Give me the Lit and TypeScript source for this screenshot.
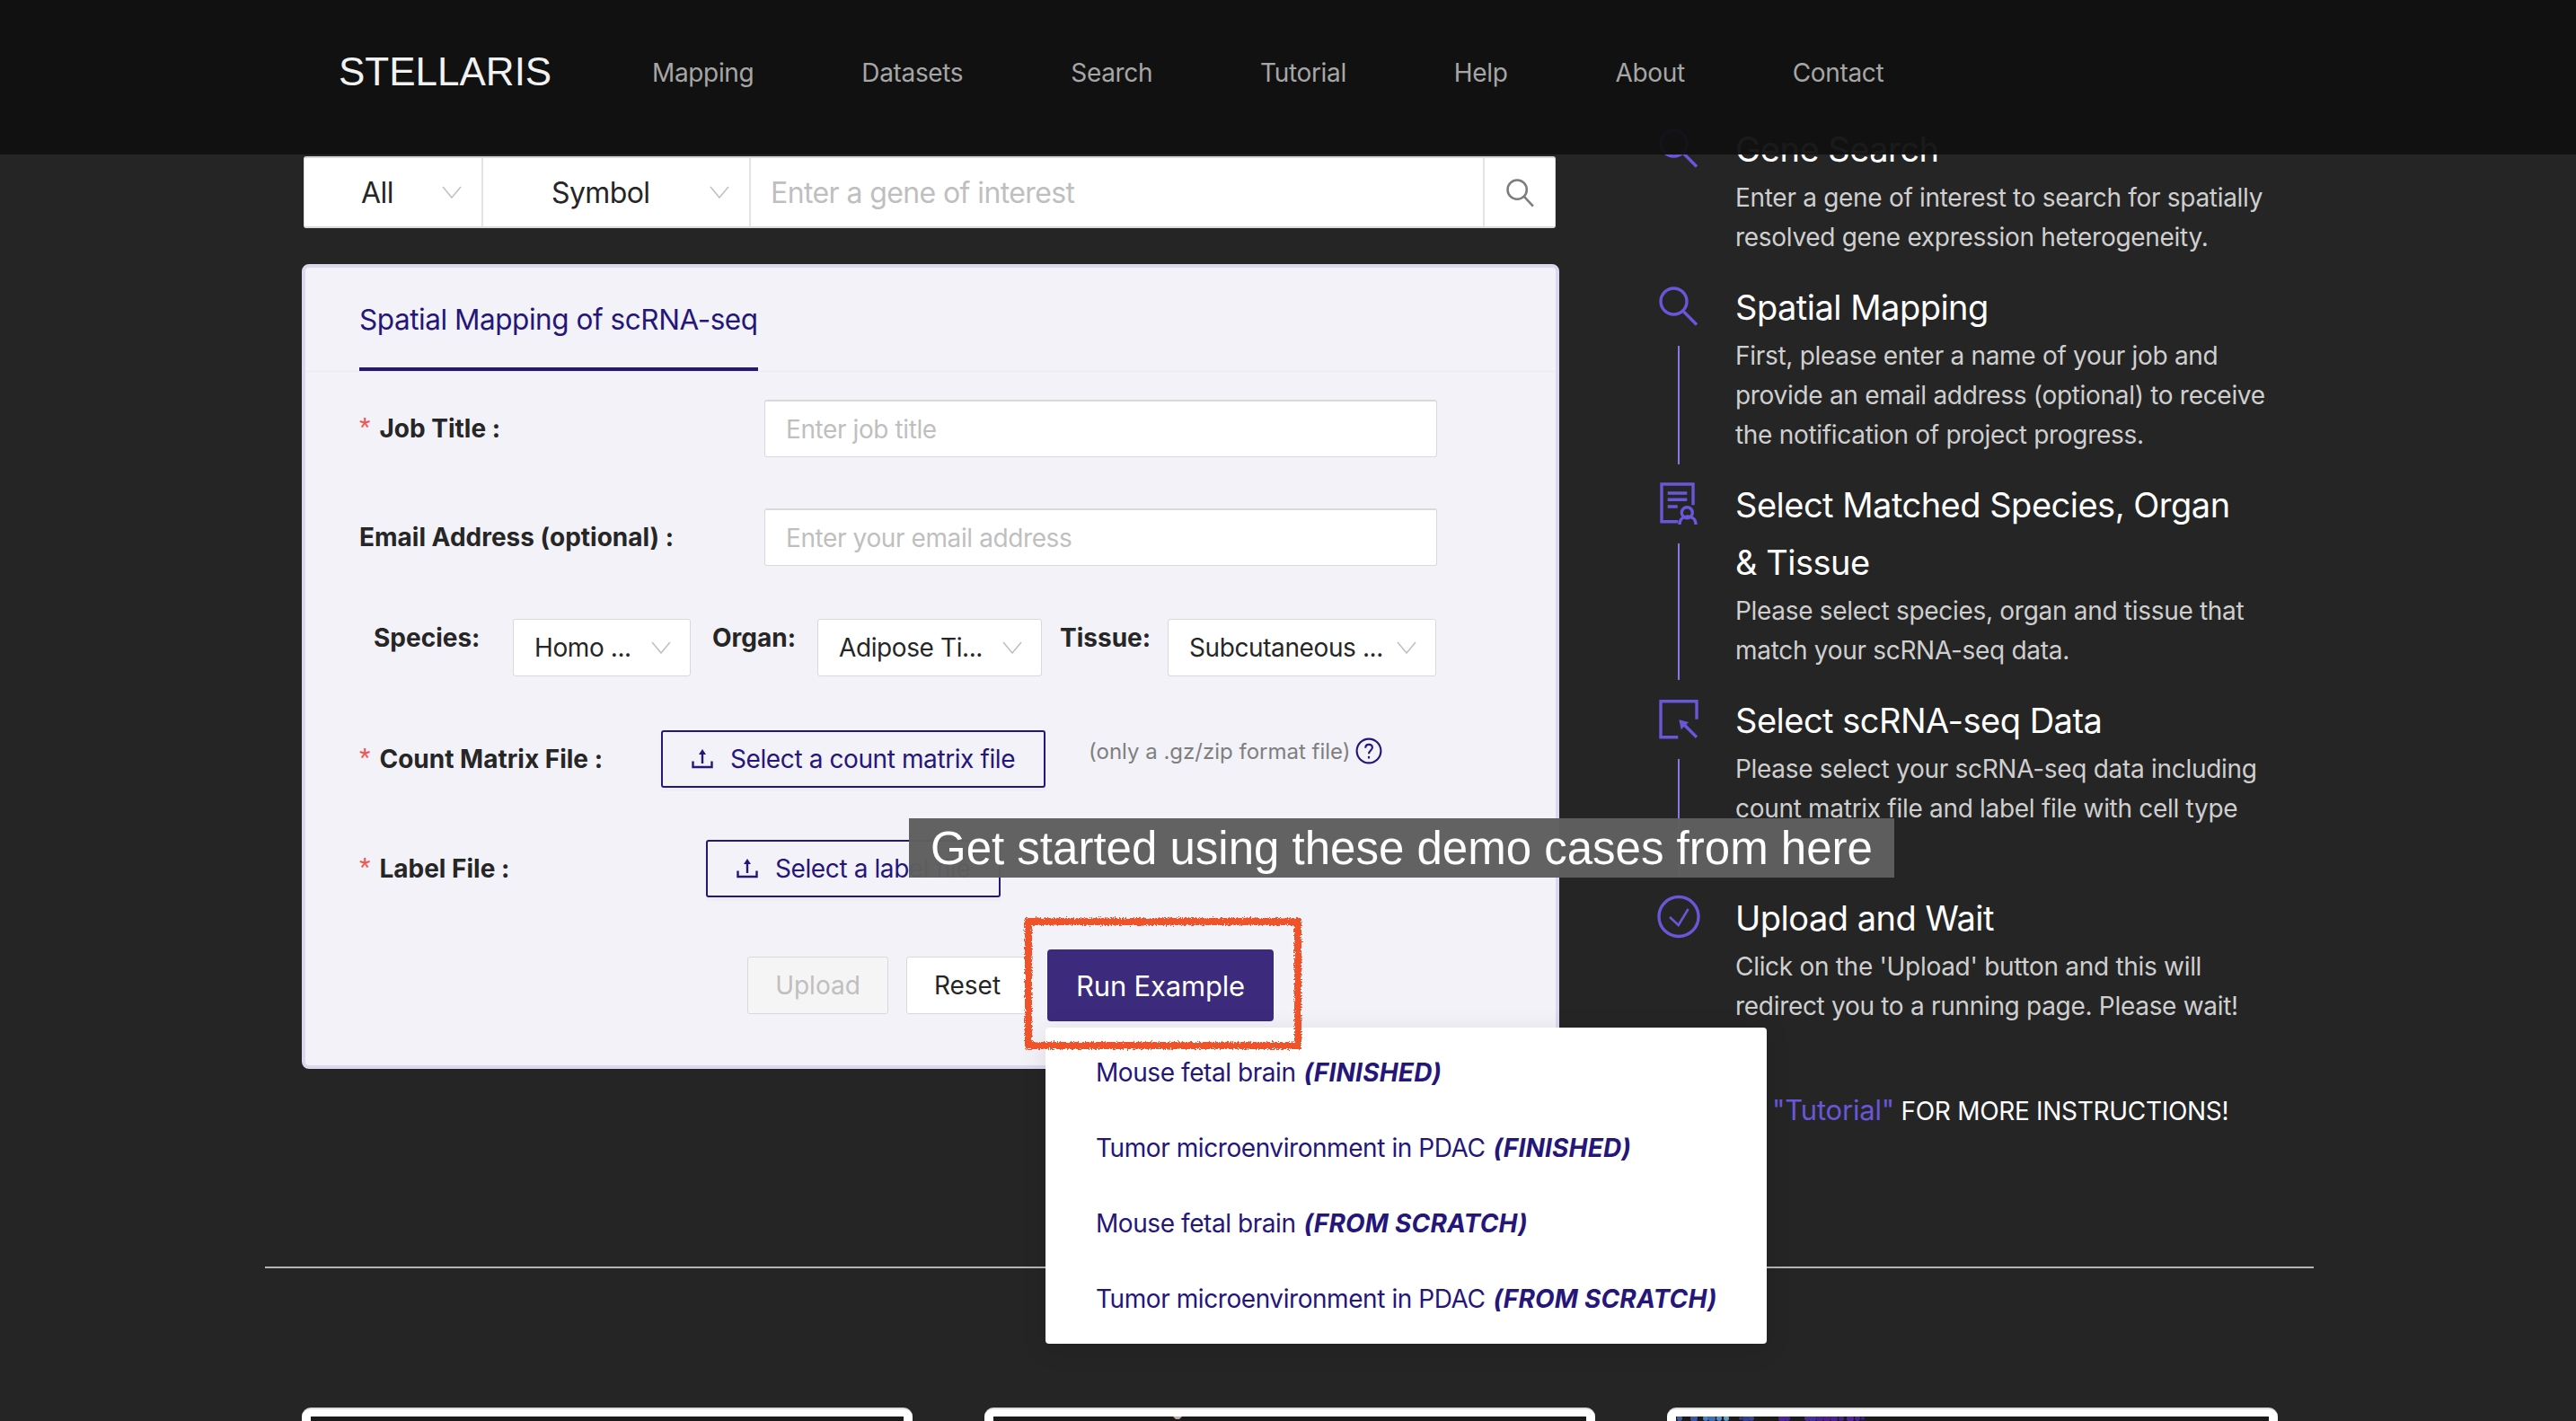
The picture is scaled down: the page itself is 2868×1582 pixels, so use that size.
import { LitElement, html, css, svg } from 'lit';
import { customElement } from 'lit/decorators.js';

const chevron = html`<svg class="chev" viewBox="0 0 22 14"><path d="M1 1 11 13 21 1" fill="none" stroke="currentColor" stroke-width="1.5"/></svg>`;

const upload = html`<svg class="up" viewBox="0 0 24 24" fill="none" stroke="currentColor" stroke-width="2.4"><path d="M1.5 14.5v6.5h21v-6.5M12 6v11"/><path d="M12 1 16 7H8Z" fill="currentColor" stroke="none"/></svg>`;

// drawn on a 48 box, traced from the reference icons
const stepIcons = {
    search: svg`<circle cx="18.5" cy="19.5" r="14.5"/><path d="M29.6 31 44 45.5"/>`,
    doc: svg`<path d="M23.3 44.7H5V3h35v23.3"/><path d="M11.7 13h21.6M11.7 20.3h21.6M11.7 28h11"/><circle cx="33.3" cy="34.7" r="6"/><path d="M25 48c0-6 4-9 9-9s9 3 9 9"/>`,
    select: svg`<path d="M23.3 44.7H4V4.7h40v20"/><path d="M44 44.7 28.3 29"/><path d="M24.3 25.3 35 28 26.7 36.3Z" fill="#6857d8" stroke="none"/>`,
    check: svg`<circle cx="24" cy="24.5" r="22"/><path d="M14 25 23.7 34 34.6 16" stroke-width="2.6"/>`,
};

const steps = [
    { icon: 'search', title: ['Gene Search'], lines: ['Enter a gene of interest to search for spatially', 'resolved gene expression heterogeneity.'], rail: false, extra: 0 },
    { icon: 'search', title: ['Spatial Mapping'], lines: ['First, please enter a name of your job and', 'provide an email address (optional) to receive', 'the notification of project progress.'], rail: true, extra: 0 },
    { icon: 'doc', title: ['Select Matched Species, Organ', '& Tissue'], lines: ['Please select species, organ and tissue that', 'match your scRNA-seq data.'], rail: true, extra: 0 },
    // a third line of this step is covered by the callout in the reference
    { icon: 'select', title: ['Select scRNA-seq Data'], lines: ['Please select your scRNA-seq data including', 'count matrix file and label file with cell type'], rail: true, extra: 44 },
    { icon: 'check', title: ['Upload and Wait'], lines: ["Click on the 'Upload' button and this will", 'redirect you to a running page. Please wait!'], rail: false, extra: 0 },
];

const examples = [
    ['Mouse fetal brain', '(FINISHED)'],
    ['Tumor microenvironment in PDAC', '(FINISHED)'],
    ['Mouse fetal brain', '(FROM SCRATCH)'],
    ['Tumor microenvironment in PDAC', '(FROM SCRATCH)'],
];

// top edge of the third gallery picture: x, radius, colour
const dots: [number, number, string][] = [
    [4, 3, '#3d5aa8'], [20, 4, '#3b55a6'], [33, 3, '#4a7fc0'], [40, 4, '#3c6cb4'], [48, 3, '#4f8fc8'],
    [56, 3, '#5aa0cc'], [72, 2, '#2c3f7c'], [78, 4, '#2f3f8c'], [84, 3, '#35458f'],
    [118, 4, '#4a2398'], [124, 3, '#4a2398'], [146, 3, '#4b2c9c'], [152, 4, '#3f2fa0'], [160, 4, '#4b1f90'],
    [168, 4, '#4d1d8c'], [176, 4, '#4b1f90'], [184, 3, '#43208a'], [194, 4, '#4f2399'], [202, 3, '#4a2096'], [208, 2, '#3d1f88'],
];

@customElement('app-root')
export class AppRoot extends LitElement {
    static styles = css`
    :host {
      display: block;
      position: relative;
      height: 1582px;
      overflow: hidden;
      background: #252525;
      font-family: Inter, 'Liberation Sans', sans-serif;
    }

    /* top bar sits over the scrolled page */
    .topbar {
      position: absolute;
      inset: 0 0 auto 0;
      z-index: 5;
      height: 172px;
      background: rgba(17, 17, 17, 0.96);
      display: flex;
      align-items: center;
      padding: 0 0 12px 377px;
      box-sizing: border-box;
    }
    .logo {
      font-family: 'Liberation Sans', Arial, sans-serif;
      font-size: 44px;
      color: #f2f2f2;
      width: 349px;
    }
    .nav { display: flex; gap: 120px; font-size: 28px; letter-spacing: -0.35px; color: #a6a6a6; padding-top: 2px; }

    .page {
      display: grid;
      grid-template-columns: 1400px 660px;
      column-gap: 109px;
      padding: 132px 0 0 336px;
      height: 1278px;
      box-sizing: border-box;
    }
    .left { padding-top: 42px; }

    .searchbar {
      display: flex;
      width: 1394px;
      height: 80px;
      margin-left: 2px;
      background: #fff;
      border: 1px solid #d9d9d9;
      border-width: 2px 1px;
      box-sizing: border-box;
      border-radius: 3px;
      font-size: 32px;
      letter-spacing: -0.6px;
      color: #262626;
    }
    .seg {
      display: flex;
      align-items: center;
      border-right: 2px solid #e4e4e4;
      box-sizing: border-box;
      position: relative;
    }
    .seg.all { width: 199px; padding-left: 63px; }
    .seg.sym { width: 298px; padding-left: 76px; }
    .seg .chev { position: absolute; right: 22px; top: 31px; color: #bfbfbf; }
    .chev { width: 22px; height: 14px; flex: none; }
    .searchbar .ph { flex: 1; padding-left: 22px; color: #bfbfbf; display: flex; align-items: center; }
    .searchbtn { width: 78px; border-left: 2px solid #e4e4e4; display: flex; align-items: center; justify-content: center; color: #7d7d7d; }
    .searchbtn svg { width: 34px; height: 34px; }

    .card {
      margin-top: 40px;
      height: 896px;
      box-sizing: border-box;
      background: #f2f2f8;
      border: 4px solid #dcd8f0;
      border-radius: 8px;
      padding: 0;
    }
    .tabs {
      height: 115px;
      border-bottom: 1px solid #ebebf0;
      padding-left: 60px;
    }
    .tab {
      display: inline-block;
      height: 115px;
      box-sizing: border-box;
      border-bottom: 4px solid #25167a;
      padding-top: 38px;
      font-size: 31.5px;
      letter-spacing: -0.45px;
      color: #25167a;
      line-height: 40px;
    }

    .row {
      display: flex;
      align-items: center;
      margin-left: 60px;
      font-size: 28px;
      color: #262626;
    }
    .lab { font-weight: 700; white-space: nowrap; line-height: 40px; }
    .star {
      color: #f5504e;
      font-weight: 400;
      font-size: 32px;
      line-height: 1;
      margin-right: 10px;
      font-family: 'Liberation Sans', sans-serif;
    }
    .input {
      height: 64px;
      background: #fff;
      border: 1px solid #d9d9d9;
      border-top-width: 2px;
      box-sizing: border-box;
      border-radius: 3px;
      display: flex;
      align-items: center;
      padding-left: 23px;
      color: #bfbfbf;
      width: 749px;
      letter-spacing: -0.4px;
    }
    .r-job { margin-top: 31px; }
    .r-job .lab { width: 451px; }
    .r-mail { margin-top: 57px; }
    .r-mail .lab { width: 451px; }

    .r-species { margin-top: 59px; }
    .r-species .lab { align-self: flex-start; margin-top: 1px; }
    .pick {
      height: 64px;
      background: #fff;
      border: 1px solid #d9d9d9;
      box-sizing: border-box;
      border-radius: 3px;
      display: flex;
      align-items: center;
      justify-content: space-between;
      padding: 0 21px 0 23px;
      white-space: nowrap;
      letter-spacing: -0.4px;
    }
    .pick .chev { color: #bfbfbf; }

    .filebtn {
      display: flex;
      align-items: center;
      gap: 19px;
      height: 64px;
      box-sizing: border-box;
      border: 2px solid #25167a;
      border-radius: 3px;
      color: #25167a;
      padding-left: 32px;
      letter-spacing: -0.4px;
      box-shadow: 0 4px 0 rgba(0, 0, 0, 0.02);
    }
    .up { width: 24px; height: 24px; flex: none; }
    .r-count { margin-top: 60px; position: relative; }
    .r-count .lab { width: 336px; }
    .r-count .filebtn { width: 428px; }
    .hint { margin-left: 48px; color: #7f7f7f; font-size: 24px; margin-top: -18px; display: flex; align-items: center; gap: 5px; }
    .hint svg { width: 30px; height: 30px; color: #25167a; }
    .r-label { margin-top: 58px; }
    .r-label .lab { width: 386px; }
    .r-label .filebtn { width: 328px; white-space: nowrap; overflow: hidden; }

    .actions { display: flex; align-items: center; margin: 58px 0 0 492px; font-size: 28px; }
    .btn {
      height: 64px;
      box-sizing: border-box;
      background: #fff;
      border: 1px solid #d9d9d9;
      border-radius: 3px;
      display: flex;
      align-items: center;
      justify-content: center;
      color: #262626;
    }
    .btn.off { width: 157px; background: #f5f5f5; color: #bfbfbf; }
    .btn.reset { width: 136px; margin-left: 20px; }
    .btn.run {
      width: 252px;
      height: 80px;
      margin-left: 21px;
      border: none;
      background: #3c2a7c;
      color: #fff;
      font-size: 31px;
      letter-spacing: -0.2px;
      border-radius: 4px;
    }

    .guide { margin-top: 2px; }
    .step { display: grid; grid-template-columns: 48px 1fr; column-gap: 39px; }
    .rail { display: flex; flex-direction: column; align-items: center; }
    .rail svg {
      width: 48px;
      height: 48px;
      margin-top: 6px;
      overflow: visible;
      fill: none;
      stroke: #6857d8;
      stroke-width: 3.4;
      flex: none;
    }
    .line { width: 2px; background: #8a78e0; flex: 1; margin: 21px 0 13px; }
    .title { font-size: 38px; letter-spacing: -0.5px; line-height: 64px; color: #fff; }
    .desc { font-size: 28px; letter-spacing: -0.3px; line-height: 44px; color: #cfcfcf; margin-bottom: 24px; }
    .desc div, .title div { white-space: nowrap; }
    .more { margin: 51px 0 0 128px; font-size: 28px; letter-spacing: -0.3px; color: #fff; white-space: nowrap; }
    .more em { font-style: normal; font-size: 31px; letter-spacing: -0.2px; color: #6857d8; }

    .rule { position: absolute; left: 295px; width: 2281px; top: 1410px; height: 2px; background: #b5b5b5; }

    .gallery {
      position: absolute;
      top: 1567px;
      left: 336px;
      display: grid;
      grid-template-columns: repeat(3, 680px);
      column-gap: 80px;
    }
    .shot {
      height: 60px;
      box-sizing: border-box;
      background: #fff;
      border-top: 2px solid #dedede;
      border-radius: 10px 10px 0 0;
      padding: 8px 10px 0;
    }
    .shot svg { display: block; width: 660px; height: 50px; background: #1a1a1a; }

    /* things on top of the page: example menu and the tutorial annotations */
    .menu {
      position: absolute;
      z-index: 3;
      left: 1164px;
      top: 1144px;
      width: 803px;
      height: 352px;
      background: #fff;
      border-radius: 4px;
      box-shadow: 0 6px 30px rgba(0, 0, 0, 0.1);
      padding: 8px 0 0 56px;
      box-sizing: border-box;
      color: #25167a;
      font-size: 28px;
    }
    .menu div { height: 84px; display: flex; align-items: center; gap: 9px; white-space: nowrap; }
    .menu span { letter-spacing: -0.43px; }
    .menu b { font-style: italic; font-weight: 700; letter-spacing: 0.2px; }

    .callout {
      position: absolute;
      z-index: 4;
      left: 1012px;
      top: 911px;
      width: 1097px;
      height: 66px;
      box-sizing: border-box;
      padding-left: 24px;
      background: rgba(95, 95, 95, 0.98);
      color: #fff;
      font-family: 'Liberation Sans', Arial, sans-serif;
      font-size: 51px;
      line-height: 68px;
      white-space: nowrap;
    }
    .scribble { position: absolute; z-index: 4; left: 1130px; top: 1010px; width: 330px; height: 170px; }
    `;

    render() {
        return html`
      <div class="page">
        <div class="left">
          <div class="searchbar">
            <div class="seg all">All ${chevron}</div>
            <div class="seg sym">Symbol ${chevron}</div>
            <div class="ph">Enter a gene of interest</div>
            <div class="searchbtn">
              <svg viewBox="0 0 24 24" fill="none" stroke="currentColor" stroke-width="1.8"><circle cx="10" cy="10" r="7.5"/><path d="M15.5 15.5 22.5 23"/></svg>
            </div>
          </div>
          <div class="card">
            <div class="tabs"><span class="tab">Spatial Mapping of scRNA-seq</span></div>
            <div class="row r-job">
              <span class="lab"><span class="star">*</span>Job Title :</span>
              <div class="input">Enter job title</div>
            </div>
            <div class="row r-mail">
              <span class="lab">Email Address (optional) :</span>
              <div class="input">Enter your email address</div>
            </div>
            <div class="row r-species">
              <span class="lab" style="margin-left:16px;width:155px">Species:</span>
              <div class="pick" style="width:198px">Homo ... ${chevron}</div>
              <span class="lab" style="margin-left:24px;width:117px">Organ:</span>
              <div class="pick" style="width:250px">Adipose Ti... ${chevron}</div>
              <span class="lab" style="margin-left:20px;width:120px">Tissue:</span>
              <div class="pick" style="width:299px">Subcutaneous ... ${chevron}</div>
            </div>
            <div class="row r-count">
              <span class="lab"><span class="star">*</span>Count Matrix File :</span>
              <div class="filebtn">${upload}Select a count matrix file</div>
              <div class="hint">(only a .gz/zip format file)
                <svg viewBox="0 0 28 28" fill="none" stroke="currentColor" stroke-width="2"><circle cx="14" cy="14" r="12.5"/><path d="M10.5 11c0-2.2 1.6-3.6 3.6-3.6s3.5 1.3 3.5 3.2c0 3-3.6 3-3.6 6.4"/><path d="M14 19.5v2.4"/></svg>
              </div>
            </div>
            <div class="row r-label">
              <span class="lab"><span class="star">*</span>Label File :</span>
              <div class="filebtn">${upload}Select a label file</div>
            </div>
            <div class="actions">
              <div class="btn off">Upload</div>
              <div class="btn reset">Reset</div>
              <div class="btn run">Run Example</div>
            </div>
          </div>
        </div>
        <div class="guide">
          ${steps.map(s => html`
            <div class="step">
              <div class="rail">
                <svg viewBox="0 0 48 48">${stepIcons[s.icon as keyof typeof stepIcons]}</svg>
                ${s.rail ? html`<div class="line"></div>` : ''}
              </div>
              <div>
                <div class="title">${s.title.map(t => html`<div>${t}</div>`)}</div>
                <div class="desc" style="padding-bottom:${s.extra}px">${s.lines.map(l => html`<div>${l}</div>`)}</div>
              </div>
            </div>
          `)}
          <div class="more"><em>"Tutorial"</em> FOR MORE INSTRUCTIONS!</div>
        </div>
      </div>

      <div class="rule"></div>
      <div class="gallery">
        <div class="shot"><svg viewBox="0 0 660 50"></svg></div>
        <div class="shot"><svg viewBox="0 0 660 50"><path d="M200 0h10l-3 3h-4z" fill="#c9a59a"/></svg></div>
        <div class="shot"><svg viewBox="0 0 660 50">${dots.map(d => svg`<circle cx=${d[0]} cy="2" r=${d[1]} fill=${d[2]}/>`)}</svg></div>
      </div>

      <div class="menu">
        ${examples.map(e => html`<div><span>${e[0]}</span><b>${e[1]}</b></div>`)}
      </div>

      <div class="callout">Get started using these demo cases from here</div>
      <svg class="scribble" viewBox="0 0 330 170">
        <filter id="rough"><feTurbulence type="fractalNoise" baseFrequency="0.6" numOctaves="2" seed="4"/><feDisplacementMap in="SourceGraphic" scale="6"/></filter>
        <rect x="15" y="16" width="300" height="138" fill="none" stroke="#f0532a" stroke-width="8" filter="url(#rough)"/>
      </svg>

      <header class="topbar">
        <div class="logo">STELLARIS</div>
        <nav class="nav">
          <span>Mapping</span><span>Datasets</span><span>Search</span><span>Tutorial</span><span>Help</span><span>About</span><span>Contact</span>
        </nav>
      </header>
    `;
    }
}
